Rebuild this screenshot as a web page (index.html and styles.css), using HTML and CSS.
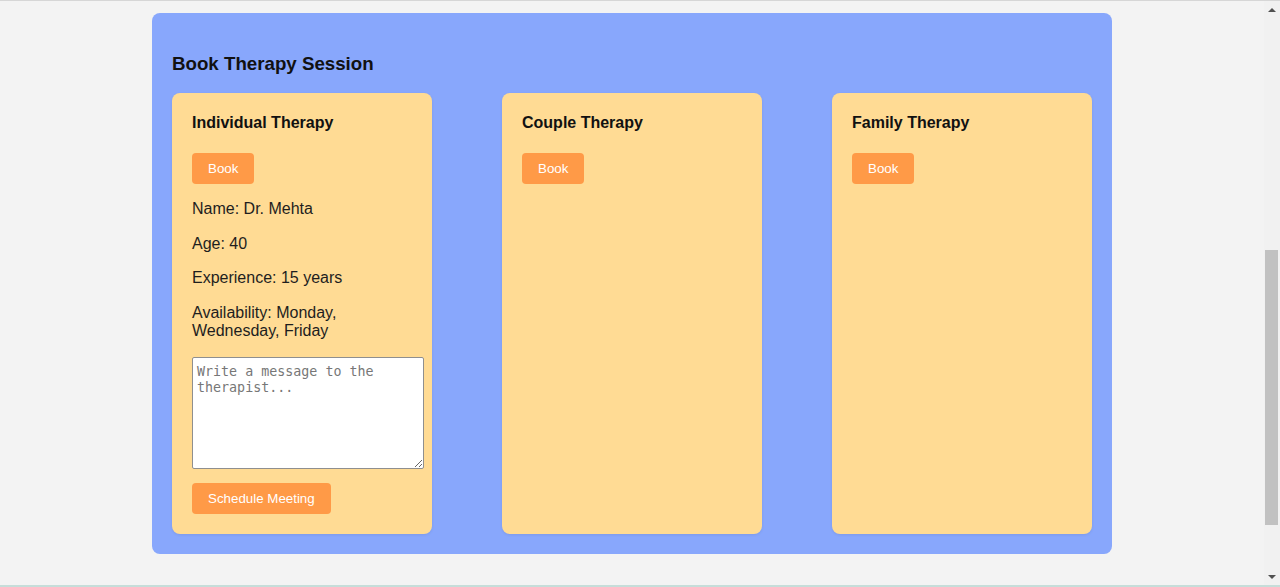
FILE: index.html
```html
<!DOCTYPE html>
<html lang="en">
<head>
<meta charset="utf-8">
<title>Book Therapy Session</title>
<link rel="stylesheet" href="styles.css">
</head>
<body>
<div class="topline"></div>
<div class="viewport">
  <main class="page">
    <section class="booking">
      <h3 class="booking-title">Book Therapy Session</h3>
      <div class="cards">
        <div class="card">
          <h4 class="card-title">Individual Therapy</h4>
          <button class="btn">Book</button>
          <p class="info">Name: Dr. Mehta</p>
          <p class="info">Age: 40</p>
          <p class="info">Experience: 15 years</p>
          <p class="info">Availability: Monday, Wednesday, Friday</p>
          <textarea class="message" placeholder="Write a message to the therapist..."></textarea>
          <button class="btn btn-schedule">Schedule Meeting</button>
        </div>
        <div class="card">
          <h4 class="card-title">Couple Therapy</h4>
          <button class="btn">Book</button>
        </div>
        <div class="card">
          <h4 class="card-title">Family Therapy</h4>
          <button class="btn">Book</button>
        </div>
      </div>
    </section>
  </main>
  <div class="scrollbar">
    <div class="arrow arrow-up"></div>
    <div class="track">
      <div class="thumb"></div>
    </div>
    <div class="arrow arrow-down"></div>
  </div>
</div>
<div class="bottomline"></div>
</body>
</html>
```

FILE: styles.css
```css
* { box-sizing: border-box; }
html, body {
  margin: 0;
  padding: 0;
  height: 587px;
  overflow: hidden;
}
body {
  font-family: "Liberation Sans", Arial, sans-serif;
  background: #f3f3f3;
  display: flex;
  flex-direction: column;
  color: #1a1a1a;
}
.topline {
  height: 1px;
  background: #d6d6d6;
  flex: none;
}
.bottomline {
  height: 2px;
  background: #c6ddd9;
  flex: none;
}
.viewport {
  flex: 1;
  display: flex;
  min-height: 0;
}
.page {
  flex: 1;
  padding-top: 12px;
}
.booking {
  width: 960px;
  margin: 0 auto;
  background: #88a7fc;
  border-radius: 8px;
  padding: 20px;
}
.booking-title {
  font-size: 18.72px;
  font-weight: bold;
  margin: 19.72px 0 18.72px;
  color: #111;
}
.cards {
  display: flex;
  justify-content: space-between;
  align-items: stretch;
}
.card {
  width: 260px;
  min-height: 440px;
  background: #ffdb94;
  border-radius: 8px;
  padding: 20px;
  box-shadow: 0 1px 3px rgba(0,0,0,0.08);
}
.card-title {
  font-size: 16px;
  font-weight: bold;
  margin: 1px 0 21px;
  color: #111;
}
.btn {
  display: inline-block;
  font-family: "Liberation Sans", Arial, sans-serif;
  font-size: 13.33px;
  color: #fff;
  background: #ff9a47;
  border: none;
  border-radius: 4px;
  padding: 8px 16px;
  line-height: 15px;
}
.info {
  font-size: 16px;
  line-height: 18.5px;
  margin: 16px 0;
  color: #1e1e1e;
}
.message {
  display: block;
  width: 232px;
  height: 112px;
  padding: 6px 4px 4px;
  border: 1px solid #8f8f8f;
  border-radius: 2px;
  background: #fff;
  font-family: "DejaVu Sans Mono", monospace;
  font-size: 13.33px;
  line-height: 16px;
  resize: vertical;
  margin: 0;
}
.message::placeholder {
  color: #777;
}
.btn-schedule {
  margin-top: 14.5px;
}
.scrollbar {
  width: 16px;
  flex: none;
  background: #f1f1f1;
  display: flex;
  flex-direction: column;
  align-items: center;
}
.arrow {
  height: 17px;
  width: 16px;
  flex: none;
  display: flex;
  align-items: center;
  justify-content: center;
}
.arrow::before {
  content: "";
  width: 0;
  height: 0;
  border-left: 4px solid transparent;
  border-right: 4px solid transparent;
}
.arrow-up::before { border-bottom: 4px solid #505050; }
.arrow-down::before { border-top: 4px solid #505050; }
.track {
  flex: 1;
  width: 100%;
  padding: 232px 2px 43px 1px;
}
.thumb {
  height: 100%;
  background: #c1c1c1;
}
```
